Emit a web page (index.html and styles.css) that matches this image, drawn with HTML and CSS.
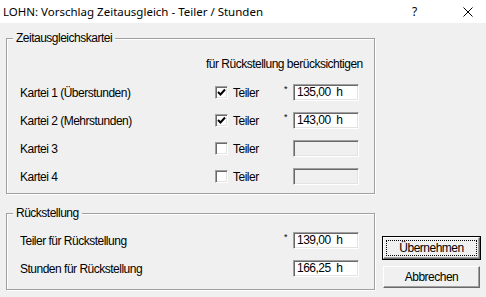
FILE: index.html
```html
<!DOCTYPE html>
<html lang="de">
<head>
<meta charset="UTF-8">
<title>LOHN: Vorschlag Zeitausgleich - Teiler / Stunden</title>
<link rel="stylesheet" href="styles.css">
</head>
<body>

<div class="window">

<div class="titlebar">
<span class="title">LOHN: Vorschlag Zeitausgleich - Teiler / Stunden</span>
<span class="help">?</span>
<span class="close">
<svg width="10" height="10" viewBox="0 0 10 10"><path d="M0.5 0.5 L9.5 9.5 M9.5 0.5 L0.5 9.5" stroke="#000" stroke-width="1" fill="none"/></svg>
</span>
</div>

<div class="client">

<div class="groups">

<div class="group group-karten">
<span class="group-title">Zeitausgleichskartei</span>
<div class="hint">für Rückstellung berücksichtigen</div>

<div class="row">
<span class="label">Kartei 1 (Überstunden)</span>
<span class="check checked"><svg width="9" height="9" viewBox="0 0 9 9"><path d="M1 4 L3.5 6.5 L8 1.5" stroke="#000" stroke-width="2" fill="none"/></svg></span>
<span class="check-label">Teiler</span>
<span class="mark">*</span>
<span class="field">135,00&nbsp; h</span>
</div>

<div class="row">
<span class="label">Kartei 2 (Mehrstunden)</span>
<span class="check checked"><svg width="9" height="9" viewBox="0 0 9 9"><path d="M1 4 L3.5 6.5 L8 1.5" stroke="#000" stroke-width="2" fill="none"/></svg></span>
<span class="check-label">Teiler</span>
<span class="mark">*</span>
<span class="field">143,00&nbsp; h</span>
</div>

<div class="row">
<span class="label">Kartei 3</span>
<span class="check"></span>
<span class="check-label">Teiler</span>
<span class="mark"></span>
<span class="field disabled"></span>
</div>

<div class="row">
<span class="label">Kartei 4</span>
<span class="check"></span>
<span class="check-label">Teiler</span>
<span class="mark"></span>
<span class="field disabled"></span>
</div>
</div>

<div class="group group-rueck">
<span class="group-title">Rückstellung</span>

<div class="row">
<span class="label wide">Teiler für Rückstellung</span>
<span class="mark">*</span>
<span class="field">139,00&nbsp; h</span>
</div>

<div class="row">
<span class="label wide">Stunden für Rückstellung</span>
<span class="mark"></span>
<span class="field">166,25&nbsp; h</span>
</div>
</div>

</div>

<div class="buttons">
<div class="btn default"><span class="focus">Übernehmen</span></div>
<div class="btn">Abbrechen</div>
</div>

</div>
</div>

</body>
</html>
```

FILE: styles.css
```css
body{
margin:0;
background:#f0f0f0;
}

.window{
width:486px;
height:297px;
overflow:hidden;
font-family:"Liberation Sans", Arial, sans-serif;
font-size:12px;
letter-spacing:-0.5px;
color:#000;
}

.titlebar{
height:23px;
background:#fff;
display:flex;
align-items:center;
font-family:"Noto Sans", sans-serif;
letter-spacing:0;
}

.title{
padding-left:3px;
font-size:11.5px;
flex:1;
}

.help{
width:12px;
font-size:12px;
margin-right:39px;
}

.close{
width:10px;
height:10px;
margin-right:13px;
display:flex;
}

.client{
display:flex;
}

.groups{
margin-left:6px;
width:369px;
}

.group{
position:relative;
border:1px solid #a0a0a0;
box-shadow:inset 1px 1px 0 #fff, 1px 1px 0 #fff;
}

.group-title{
position:absolute;
top:-8px;
left:6px;
padding:0 3px;
background:#f0f0f0;
line-height:15px;
}

.group-karten{
margin-top:15px;
height:154px;
padding:17px 0 0 0;
box-sizing:border-box;
height:156px;
}

.group-rueck{
margin-top:19px;
padding:18px 0 0 0;
box-sizing:border-box;
height:77px;
}

.hint{
height:17px;
line-height:17px;
padding-left:199px;
margin-bottom:11px;
}

.row{
display:grid;
grid-template-columns:195px 18px 50px 10px 66px;
height:17px;
align-items:center;
padding-left:13px;
margin-bottom:11px;
}

.label.wide{
grid-column:1 / 4;
}

.check{
width:13px;
height:13px;
box-sizing:border-box;
background:#fff;
border:1px solid;
border-color:#a0a0a0 #fff #fff #a0a0a0;
box-shadow:inset 1px 1px 0 #696969, inset -1px -1px 0 #e3e3e3;
display:flex;
align-items:center;
justify-content:center;
}

.mark{
font-size:9px;
align-self:start;
padding-left:1px;
line-height:11px;
}

.field{
height:17px;
box-sizing:border-box;
background:#fff;
border:1px solid;
border-color:#a0a0a0 #fff #fff #a0a0a0;
box-shadow:inset 1px 1px 0 #696969, inset -1px -1px 0 #e3e3e3;
padding-left:3px;
line-height:15px;
white-space:nowrap;
}

.field.disabled{
background:#f0f0f0;
}

.buttons{
margin-left:8px;
padding-top:214px;
display:flex;
flex-direction:column;
gap:7px;
}

.btn{
width:97px;
height:22px;
box-sizing:border-box;
background:#f0f0f0;
border:1px solid;
border-color:#fff #696969 #696969 #fff;
box-shadow:inset -1px -1px 0 #a0a0a0;
display:flex;
align-items:center;
justify-content:center;
}

.btn.default{
outline:1px solid #000;
outline-offset:0;
border-color:#fff #696969 #696969 #fff;
}

.focus{
flex:1;
align-self:stretch;
margin:2px;
border:1px dotted #000;
display:flex;
align-items:center;
justify-content:center;
}
```
